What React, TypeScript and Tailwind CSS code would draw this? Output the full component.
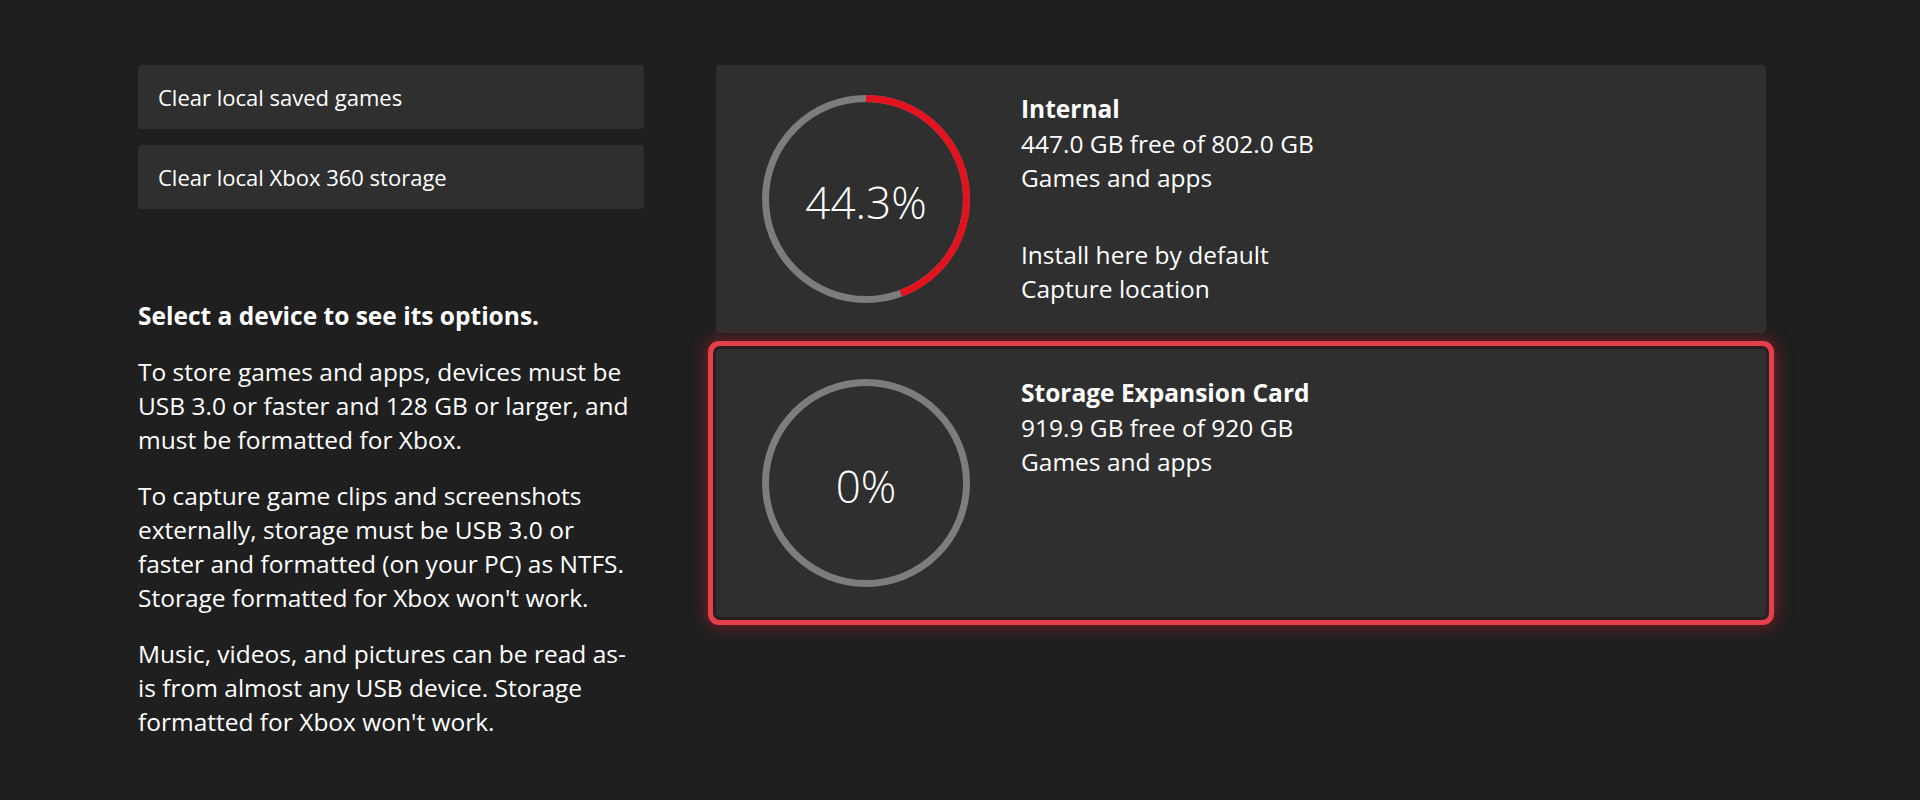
import React from 'react'

interface IDrive {
  name: string
  free: string
  used: number
  label: string
  extra: string[]
  selected?: boolean
}

const drives: IDrive[] = [
  {
    name: 'Internal',
    free: '447.0 GB free of 802.0 GB',
    used: 44.3,
    label: '44.3%',
    extra: ['Install here by default', 'Capture location'],
  },
  {
    name: 'Storage Expansion Card',
    free: '919.9 GB free of 920 GB',
    used: 0,
    label: '0%',
    extra: [],
    selected: true,
  },
]

// usage ring, red arc starts at 12 o'clock
const UsageRing = ({ used, label }: { used: number; label: string }) => {
  const r = 100.5
  const c = 2 * Math.PI * r
  return (
    <div className="relative h-[208px] w-[208px] shrink-0">
      <svg width="208" height="208" viewBox="0 0 208 208" className="absolute inset-0">
        <circle cx="104" cy="104" r={r} fill="none" stroke="#7d7d7d" strokeWidth="7" />
        {used > 0 && (
          <circle
            cx="104"
            cy="104"
            r={r}
            fill="none"
            stroke="#e3121f"
            strokeWidth="7"
            strokeDasharray={`${(c * used) / 100} ${c}`}
            transform="rotate(-90 104 104)"
          />
        )}
      </svg>
      <div className="absolute inset-0 flex items-center justify-center pt-[6px] text-[44px] font-[350] text-white">
        {label}
      </div>
    </div>
  )
}

const DriveCard = ({ drive }: { drive: IDrive }) => {
  return (
    <div
      className={`flex h-[268px] items-center rounded-[4px] bg-[#2f2f2f] pl-[46px] ${
        drive.selected
          ? 'shadow-[0_0_0_3px_#2b1e20,0_0_0_8px_#e63f4c,0_0_16px_9px_rgba(200,30,45,0.55)]'
          : ''
      }`}
    >
      <UsageRing used={drive.used} label={drive.label} />
      <div className="ml-[51px] self-start pt-[27px] text-[24.5px] leading-[34.5px] text-white">
        <div className="font-bold">{drive.name}</div>
        <div>{drive.free}</div>
        <div>Games and apps</div>
        {drive.extra.length > 0 && (
          <div className="mt-[42px]">
            {drive.extra.map((line) => (
              <div key={line}>{line}</div>
            ))}
          </div>
        )}
      </div>
    </div>
  )
}

export default function App() {
  return (
    <div className="min-h-screen bg-[#1f1f1f] pl-[138px] pt-[65px] font-['Open_Sans','Noto_Sans',sans-serif] text-white">
      <div className="flex gap-[72px]">
        {/* left column */}
        <div className="w-[506px] shrink-0">
          <div className="flex flex-col gap-4">
            <button className="flex h-16 items-center rounded-[4px] bg-[#2f2f2f] px-5 text-left text-[22px] text-white">
              Clear local saved games
            </button>
            <button className="flex h-16 items-center rounded-[4px] bg-[#2f2f2f] px-5 text-left text-[22px] text-white">
              Clear local Xbox 360 storage
            </button>
          </div>

          <div className="mt-[90px] w-[494px] space-y-[22px] text-[24.5px] leading-[34px]">
            <p className="font-bold">Select a device to see its options.</p>
            <p>
              To store games and apps, devices must be USB 3.0 or faster and 128 GB or larger, and
              must be formatted for Xbox.
            </p>
            <p>
              To capture game clips and screenshots externally, storage must be USB 3.0 or faster
              and formatted (on your PC) as NTFS. Storage formatted for Xbox won't work.
            </p>
            <p>
              Music, videos, and pictures can be read as-is from almost any USB device. Storage
              formatted for Xbox won't work.
            </p>
          </div>
        </div>

        {/* drives */}
        <div className="flex w-[1050px] flex-col gap-4">
          {drives.map((d) => (
            <DriveCard key={d.name} drive={d} />
          ))}
        </div>
      </div>
    </div>
  )
}
